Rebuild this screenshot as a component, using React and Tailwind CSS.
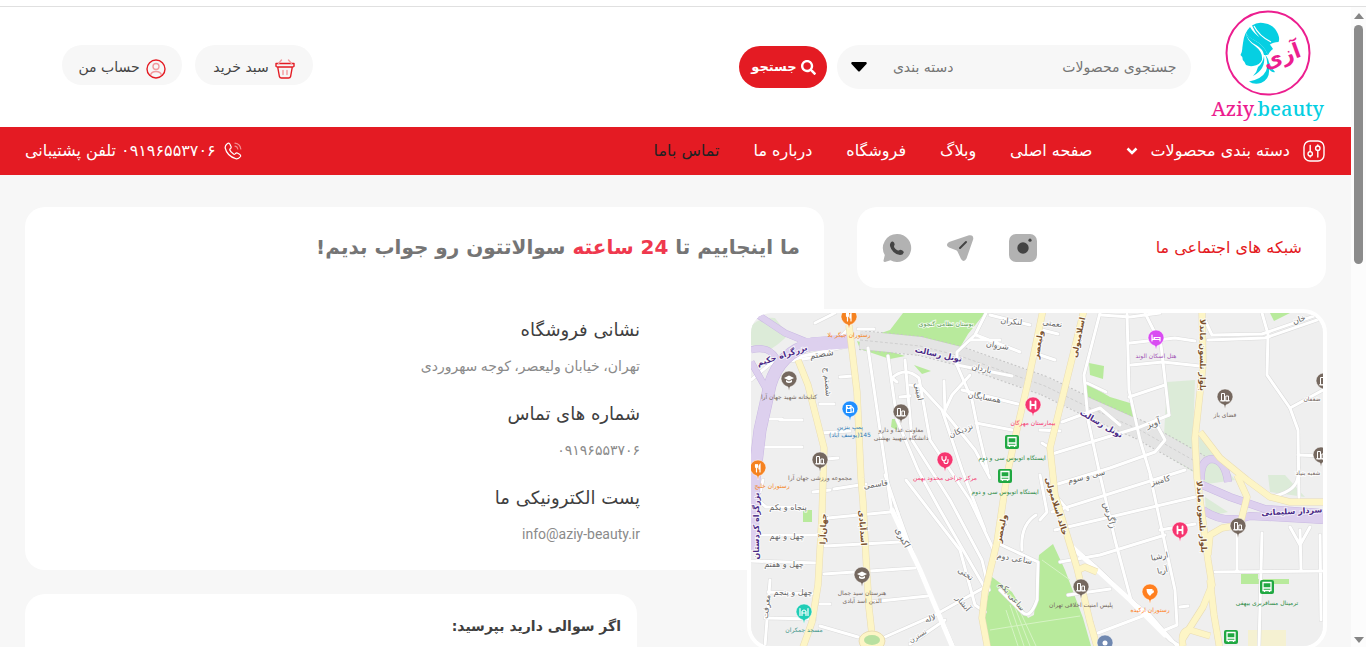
import React, { useState } from "react";

const NAV_LINKS = [
  { label: "صفحه اصلی", href: "#home" },
  { label: "وبلاگ", href: "#blog" },
  { label: "فروشگاه", href: "#shop" },
  { label: "درباره ما", href: "#about" },
  { label: "تماس باما", href: "#contact", active: true },
];

const CONTACT_INFO = [
  { title: "نشانی فروشگاه", value: "تهران، خیابان ولیعصر، کوجه سهروردی" },
  { title: "شماره های تماس", value: "۰۹۱۹۶۵۵۳۷۰۶" },
  { title: "پست الکترونیکی ما", value: "info@aziy-beauty.ir" },
];

// ---- map data ----
const GREENS = [
  "M903 313H985L968 334L958 351L925 343L872 336L890 330Z",
  "M857 341L905 356L890 359L860 349Z",
  "M914 365L931 371L922 374Z",
  "M1089 363L1104 366L1103 379L1090 375Z",
  "M1086 383L1110 397L1130 403L1136 426L1110 412L1088 402Z",
  "M1270 313H1290L1274 321Z",
  "M803 510h9v12h-9z",
  "M892 419h6l-1 11l-6 -3z",
  "M992 577L1012 592L1028 618L1034 615L1039 555L1053 544L1065 570L1083 618L1091 646H988L984 616Z",
  "M1241 574h17v10h-17z",
  "M1258 579h31v5h-31z",
];

const PALE_GREENS = [
  "M751 326Q762 316 775 318L788 335Q780 344 766 352L751 345Z",
  "M1167 382L1195 380L1193 438L1198 475L1163 453Z",
  "M1199 437L1212 450L1235 480L1200 485Z",
  "M1205 497L1228 512L1206 517Z",
  "M1268 475L1285 475L1305 497L1270 492Z",
];

const WHITE_ROADS = [
  "M849 328L823 356L770 364L751 380",
  "M852 345L790 359L776 372L766 420L752 470",
  "M815 323L835 313",
  "M858 329L874 329",
  "M868 348L880 430L892 513",
  "M888 356L897 420L918 470L940 510L985 588",
  "M905 360L912 440L950 500L982 560L989 590",
  "M892 378Q905 366 919 378L930 440L970 500L996 555",
  "M892 378L897 382M919 385L942 410L962 470L985 530",
  "M910 385L918 386M900 397L910 396",
  "M944 381L945 413L975 450L990 478",
  "M970 375L952 395L945 410",
  "M956 363L972 400L978 430L988 472",
  "M986 313L975 335L957 352L957 365L1012 376",
  "M990 315L1030 325M976 335L1020 352M970 340L1000 340",
  "M962 390L1018 404M976 423L1012 430",
  "M1042 330L1058 334M1040 355L1055 360",
  "M840 377L853 376M820 404L834 404M820 433L850 431",
  "M758 419L782 419M780 420L802 420M758 447L802 447",
  "M815 460L838 458M813 492L830 490",
  "M763 480L758 500L766 507L803 507M751 535L823 535M751 561L817 563M770 580L765 646M768 592L815 594M765 618L815 619",
  "M828 518L890 512M825 546L900 542M824 574L915 568M820 604L830 604M870 602L928 596",
  "M834 489L866 484M820 626L858 637M885 637L935 615L985 587M910 644L945 620",
  "M898 513L915 560L935 605L953 646",
  "M885 475L898 513M906 480L960 550L975 605L985 612",
  "M1100 313L1084 375L1088 420L1100 475M1127 313L1129 390L1140 440L1152 480",
  "M1101 315L1130 317L1160 313M1145 313L1161 345L1165 380L1169 415",
  "M1130 343L1175 338L1195 341M1131 365L1163 362L1200 366",
  "M1129 397L1165 385M1062 422L1100 408L1120 425M1052 454L1140 427L1169 415",
  "M1158 427L1165 440L1155 452L1110 468L1058 484",
  "M1087 383L1106 392M1040 430L1060 431",
  "M1042 443L1050 448M1055 495L1068 510",
  "M1055 530L1195 497M1060 562L1100 555L1165 535",
  "M1100 475L1115 540L1131 600L1170 640L1180 646",
  "M1150 475L1163 535L1175 590L1177 625L1165 630",
  "M1070 545L1096 567L1130 600L1150 615L1177 646",
  "M1098 633L1148 614M1068 595L1110 589M1052 512L1185 470",
  "M1040 475L1047 512L1040 520",
  "M1036 515Q1020 525 1022 550M995 542L1038 562L1037 600Q1030 620 1022 612L1000 590",
  "M1160 530L1195 524M1180 607L1188 606",
  "M1205 320L1212 335L1262 334L1323 313M1208 340L1265 338L1323 318",
  "M1262 313L1268 334L1267 375L1290 408L1298 430L1299 500",
  "M1290 408L1323 390M1298 455L1323 456",
  "M1215 572L1323 571M1237 535L1237 572M1262 533L1259 646M1300 530L1301 570M1290 527L1300 545L1310 527M1320 535L1321 620",
  "M1298 475Q1298 490 1275 496",
];

const YELLOW_ROADS = [
  "M798 360L808 385L824 448L822 515L818 585L812 622L802 650",
  "M849 325L857 392L861 478L863 502L866 558L869 608L872 635",
  "M1043 310L1028 382L1015 438L1007 475L997 542L985 592L982 618L988 650",
  "M1084 310L1068 375L1050 448L1055 495L1067 535L1077 568L1090 622L1098 650",
  "M1202 310L1203 365L1195 438L1197 478L1203 522L1208 560L1212 585L1203 607L1182 640",
  "M1210 580L1214 615L1220 650",
  "M1200 432L1220 458L1247 480L1270 497L1290 502L1323 502",
  "M1208 555L1210 535L1222 528L1240 525L1247 497L1237 475",
  "M1078 570L1085 567L1097 572",
  "M1183 646Q1180 630 1190 630L1210 636",
];

const STREETS = [
  { t: "بزرگراه حکیم", x: 783, y: 358, r: -18, c: "#4b2a86", s: 8, b: 1 },
  { t: "تونل رسالت", x: 938, y: 357, r: 12, c: "#4b2a86", s: 8, b: 1 },
  { t: "تونل رسالت", x: 1100, y: 426, r: 30, c: "#4b2a86", s: 8, b: 1 },
  { t: "سردار سلیمانی", x: 1292, y: 514, r: -3, c: "#4b2a86", s: 8, b: 1 },
  { t: "بزرگراه کردستان", x: 759, y: 526, r: -90, c: "#4b2a86", s: 8, b: 1 },
  { t: "ولیعصر", x: 1041, y: 345, r: -80, c: "#7a5230", s: 8, b: 1 },
  { t: "ولیعصر", x: 1004, y: 529, r: -78, c: "#7a5230", s: 8, b: 1 },
  { t: "اسلامبولی", x: 1081, y: 338, r: -78, c: "#7a5230", s: 8, b: 1 },
  { t: "خالد اسلامبولی", x: 1054, y: 507, r: 73, c: "#7a5230", s: 8, b: 1 },
  { t: "بلوار نلسون ماندلا", x: 1200, y: 355, r: 90, c: "#7a5230", s: 8, b: 1 },
  { t: "بلوار نلسون ماندلا", x: 1199, y: 517, r: 86, c: "#7a5230", s: 8, b: 1 },
  { t: "جهان‌آرا", x: 826, y: 529, r: -88, c: "#7a5230", s: 8, b: 1 },
  { t: "اسدآبادی", x: 860, y: 528, r: 86, c: "#7a5230", s: 8, b: 1 },
  { t: "شصتم", x: 822, y: 357, r: -10, c: "#666", s: 9 },
  { t: "شصتم ج", x: 825, y: 382, r: 86, c: "#666", s: 8 },
  { t: "امینی", x: 916, y: 392, r: 78, c: "#666", s: 8 },
  { t: "لنکران", x: 1011, y: 324, r: 6, c: "#666", s: 8 },
  { t: "شروان", x: 997, y: 348, r: 10, c: "#666", s: 8 },
  { t: "باردان", x: 981, y: 371, r: 12, c: "#666", s: 8 },
  { t: "همسایگان", x: 984, y: 400, r: 10, c: "#666", s: 8 },
  { t: "نزدیکان", x: 962, y: 433, r: -22, c: "#666", s: 8 },
  { t: "نعمتی", x: 1052, y: 326, r: 8, c: "#666", s: 8 },
  { t: "آویز", x: 1154, y: 426, r: -18, c: "#666", s: 9 },
  { t: "سی و سوم", x: 1087, y: 479, r: -14, c: "#666", s: 8 },
  { t: "کامبیز", x: 1161, y: 483, r: -14, c: "#666", s: 8 },
  { t: "زاگرس", x: 1107, y: 516, r: 74, c: "#666", s: 9 },
  { t: "ارشیا", x: 1160, y: 559, r: -12, c: "#666", s: 8 },
  { t: "آریا", x: 1163, y: 573, r: -12, c: "#666", s: 8 },
  { t: "قاسمی", x: 876, y: 487, r: -8, c: "#666", s: 8 },
  { t: "پنجاه و یکم", x: 788, y: 510, r: 0, c: "#666", s: 8 },
  { t: "چهل و نهم", x: 787, y: 539, r: 0, c: "#666", s: 8 },
  { t: "چهل و هفتم", x: 784, y: 567, r: 0, c: "#666", s: 8 },
  { t: "چهل و پنجم", x: 793, y: 595, r: 0, c: "#666", s: 8 },
  { t: "معرفت", x: 769, y: 607, r: -84, c: "#666", s: 8 },
  { t: "اکبری", x: 900, y: 539, r: 62, c: "#666", s: 9 },
  { t: "تختی", x: 964, y: 576, r: 35, c: "#666", s: 8 },
  { t: "آبشار", x: 961, y: 605, r: 50, c: "#666", s: 8 },
  { t: "ساعی دوم", x: 1014, y: 561, r: 10, c: "#666", s: 8 },
  { t: "ساعی یکم", x: 1010, y: 598, r: 50, c: "#666", s: 8 },
  { t: "لاله", x: 931, y: 621, r: -18, c: "#666", s: 8 },
  { t: "نسترن", x: 919, y: 638, r: -32, c: "#666", s: 7 },
  { t: "خان", x: 1300, y: 322, r: -20, c: "#666", s: 8 },
  { t: "ضعفان", x: 1312, y: 401, r: 0, c: "#75685f", s: 6 },
  { t: "شعبه بنیاد", x: 1308, y: 475, r: 0, c: "#75685f", s: 6 },
  { t: "بوستان نظامی گنجوی", x: 946, y: 326, r: 0, c: "#5b9a55", s: 6 },
];

const PLACES = [
  { x: 849, y: 317, c: "#f58220", icon: "fork", lines: ["رستوران جیگر بلا"] },
  { x: 789, y: 379, c: "#75685f", icon: "cap", lines: ["کتابخانه شهید جهان آرا"] },
  { x: 850, y: 409, c: "#1f8fff", tc: "#2b7bb9", icon: "fuel", lines: ["پمپ بنزین", "145(یوسف آباد)"] },
  { x: 901, y: 412, c: "#75685f", icon: "building", lines: ["معاونت غذا و دارو", "دانشگاه شهیید بهشتی"] },
  { x: 820, y: 460, c: "#75685f", icon: "building", lines: ["مجموعه ورزشی جهان آرا"] },
  { x: 758, y: 468, c: "#f58220", icon: "fork", lines: ["رستوران خلیج"], dx: 14 },
  { x: 945, y: 460, c: "#f6356f", icon: "steth", lines: ["مرکز جراحی محدود بهمن"] },
  { x: 1033, y: 405, c: "#f6356f", icon: "h", lines: ["بیمارستان مهرگان"] },
  { x: 1180, y: 530, c: "#f6356f", icon: "h", lines: [] },
  { x: 1156, y: 338, c: "#d94cf2", tc: "#a355b5", icon: "bed", lines: ["هتل اسکان الوند"] },
  { x: 1225, y: 397, c: "#75685f", icon: "building", lines: ["فضای باز"] },
  { x: 1324, y: 381, c: "#75685f", icon: "building", lines: [] },
  { x: 1321, y: 455, c: "#75685f", icon: "building", lines: [] },
  { x: 1238, y: 526, c: "#75685f", icon: "building", lines: [] },
  { x: 862, y: 575, c: "#75685f", icon: "cap", lines: ["هنرستان سید جمال", "الدین اسد آبادی"] },
  { x: 804, y: 612, c: "#20cdb6", tc: "#3a9488", icon: "mosque", lines: ["مسجد جمکران"] },
  { x: 1081, y: 587, c: "#75685f", icon: "building", lines: ["پلیس امنیت اخلاقی تهران"] },
  { x: 1150, y: 592, c: "#ff7f1f", icon: "cup", lines: ["رستوران ارکیده"] },
  { x: 1105, y: 643, c: "#7088b0", icon: "dot", lines: [] },
];

const STATIONS = [
  { x: 1012, y: 442, label: "ایستگاه اتوبوس سی و دوم" },
  { x: 1005, y: 476, label: "ایستگاه اتوبوس سی و دوم" },
  { x: 1267, y: 587, label: "ترمینال مسافربری بیهقی" },
  { x: 1231, y: 637, label: "" },
];

function PinIcon({ name }) {
  const line = { fill: "none", stroke: "#fff", strokeWidth: 1.2, strokeLinecap: "round" };
  switch (name) {
    case "fork":
      return <path d="M-2.5 -3.5v2q0 1.5 1 1.5v4M-1.5 -3.5v3M-.5 -3.5v2q0 1.500 -1 1.500M2 4v-7.500q-1.500 1.500 -1 4.500h1" {...line} />;
    case "cap":
      return <path d="M-5 -1L0 -3.500L5 -1L0 1.500ZM-3 1v2q3 2 6 0v-2l-3 1.500z" fill="#fff" />;
    case "fuel":
      return <path d="M-3.500 3.500v-7h4.500v7zM-2.500 -2v1.500h2.500V-2M2 -2l1.500 1.500v3.500h-1.500" {...line} />;
    case "steth":
      return <path d="M-3 -3.500v2q0 2 2 2t2 -2v-2M-1 .5v1q0 2 2 2t2 -2v-2" {...line} />;
    case "h":
      return <path d="M-2.500 -3.500v7M2.500 -3.500v7M-2.500 0h5" {...line} strokeWidth={1.8} />;
    case "bed":
      return <path d="M-4 -3v6M-4 1.500h8M4 3v-3.500h-5.500v2M-2.800 0h.2" {...line} />;
    case "mosque":
      return <path d="M-4 -3.500v7M4 -3.500v7M-2 3.500v-4q2 -3 4 0v4M-2 1h4" {...line} />;
    case "cup":
      return <path d="M-3.500 -3h6v1.500h1.500q0 3 -2 3L0 4L-2 2Q-3.500 0 -3.500 -3Z" fill="#fff" />;
    case "dot":
      return <circle r="2.500" fill="#fff" />;
    default:
      return <path d="M-3.500 3.500v-7h3v7zM.8 3.500v-4.500h2.700v4.500zM-4.500 3.800h9" {...line} strokeWidth={1} />;
  }
}

function CityMap() {
  const font = "'DejaVu Sans', sans-serif";
  return (
    <svg viewBox="751 313 572 333" className="block h-auto w-full" role="img" aria-label="نقشه">
      <rect x="751" y="313" width="572" height="333" fill="#efefef" />
      {PALE_GREENS.map((d) => <path key={d} d={d} fill="#dcebd8" />)}
      {GREENS.map((d) => <path key={d} d={d} fill="#b8ea9c" />)}
      <rect x="1248" y="630" width="38" height="18" fill="#f5f1d2" />
      <path d="M1010 605L1024 646M1014 605L1030 646M1018 607L1036 646M1006 610L1018 646M990 630L1040 622L1080 616M1042 560L1070 580" stroke="#d6f3c4" strokeWidth="1" fill="none" />

      {/* tunnel */}
      <g fill="none">
        <path d="M860 340L920 346L960 356L1045 386L1090 408L1140 430L1200 464" stroke="#c4c4c4" strokeWidth="20" strokeDasharray="2 2" />
        <path d="M860 340L920 346L960 356L1045 386L1090 408L1140 430L1200 464" stroke="#e4e4e4" strokeWidth="18" />
        <path d="M860 340L920 346L960 356L1045 386L1090 408L1140 430L1200 464" stroke="#cfcfcf" strokeWidth="1" strokeDasharray="3 2" />
      </g>

      <g fill="none" strokeLinejoin="round" strokeLinecap="round">
        {WHITE_ROADS.map((d) => <path key={d} d={d} stroke="#dadada" strokeWidth="4" />)}
        {WHITE_ROADS.map((d) => <path key={d} d={d} stroke="#fff" strokeWidth="3" />)}
        <path d="M892 510L920 570L953 648M1070 545L1130 600L1165 635" stroke="#fff" strokeWidth="5" />
      </g>

      {/* highways */}
      <g fill="none" stroke="#c9b8e2">
        <path d="M852 341L812 344Q780 352 770 385L760 430L754 480L752 550" strokeWidth="13" />
        <path d="M755 313L785 333L812 344M751 350Q768 345 776 358M751 362L768 392" strokeWidth="7" />
        <path d="M1200 484L1230 497L1265 509L1323 513M1203 510Q1225 525 1250 516L1323 520M1201 480Q1200 460 1212 459Q1225 460 1228 482" strokeWidth="8" />
      </g>
      <g fill="none" stroke="#ddd0ee">
        <path d="M852 341L812 344Q780 352 770 385L760 430L754 480L752 550" strokeWidth="12" />
        <path d="M755 313L785 333L812 344M751 350Q768 345 776 358M751 362L768 392" strokeWidth="6" />
        <path d="M1200 484L1230 497L1265 509L1323 513M1203 510Q1225 525 1250 516L1323 520M1201 480Q1200 460 1212 459Q1225 460 1228 482" strokeWidth="7" />
        <path d="M800 341L852 336V346L800 350Z" fill="#ddd0ee" strokeWidth="4" />
      </g>

      <g fill="none" strokeLinejoin="round">
        {YELLOW_ROADS.map((d) => <path key={d} d={d} stroke="#e9dcb4" strokeWidth="7" />)}
        {YELLOW_ROADS.map((d) => <path key={d} d={d} stroke="#fdf5c6" strokeWidth="6" />)}
      </g>
      <ellipse cx="872" cy="641" rx="13" ry="10" fill="#fdf5c6" stroke="#e9dcb4" />
      <ellipse cx="872" cy="640" rx="8" ry="5" fill="#b8e0a0" />

      {STREETS.map((s) => (
        <text
          key={s.t + s.x}
          transform={`translate(${s.x} ${s.y}) rotate(${s.r})`}
          textAnchor="middle"
          fontFamily={font}
          fontSize={s.s}
          fontWeight={s.b ? 600 : 400}
          fill={s.c}
          stroke="#fff"
          strokeWidth="2"
          strokeOpacity="0.7"
          paintOrder="stroke"
        >
          {s.t}
        </text>
      ))}

      {STATIONS.map((s) => (
        <g key={s.y} transform={`translate(${s.x} ${s.y})`}>
          <rect x="-7" y="-7" width="14" height="14" rx="2" fill="#20a842" />
          <path d="M-4 -4.500h8v8h-8zM-4 1h8M-2.500 3.500v1.500M2.500 3.500v1.500" fill="none" stroke="#fff" strokeWidth="1.300" />
          {s.label && <text y="18" textAnchor="middle" fontFamily={font} fontSize="6" fill="#2b8a45">{s.label}</text>}
        </g>
      ))}

      {PLACES.map((p) => (
        <g key={`${p.x}-${p.y}`} transform={`translate(${p.x} ${p.y})`}>
          <path d="M-8 0A8 8 0 1 1 8 0Q7 6 1 8L0 12L-1 8Q-7 6 -8 0Z" fill={p.c} stroke="#fff" strokeWidth="0.500" />
          <PinIcon name={p.icon} />
          {p.lines.map((line, i) => (
            <text key={line} x={p.dx || 0} y={20 + i * 8} textAnchor="middle" fontFamily={font} fontSize="6" fill={p.tc || p.c}>
              {line}
            </text>
          ))}
        </g>
      ))}
    </svg>
  );
}

function Logo() {
  return (
    <a href="#home" className="flex flex-col items-center" aria-label="Aziy.beauty">
      <svg viewBox="0 0 88 88" className="h-[88px] w-[88px]">
        <circle cx="44" cy="44" r="41.500" fill="#fff" stroke="#ec1e8f" strokeWidth="2" />
        {/* face and hair */}
        <path d="M19 34Q20 24 26 18Q30 25 37 29Q45 33 49 40Q46 42 44 46Q40 36 30 31Q24 28 22 24Q23 32 31 37Q39 43 38 51Q36 56 29 57Q25 57.500 22 56L20.500 53L18.800 51L18.300 48L16.500 46Q18.500 42 18.300 39Z" fill="#06cfe2" />
        <path d="M22 25Q24 32 32 36Q39 40 40 46L44 46Q40 36 30 31Q25 28 22 25Z" fill="#06cfe2" />
        <path d="M28 16.500Q33 13 39 14Q50 15 54 25Q56 30 54.500 33Q47 33 44 38Q41 33 36 29Q31 24 28 16.500Z" fill="#06cfe2" />
        <path d="M30 17Q35 27 47 33" fill="none" stroke="#fff" strokeWidth="1.200" />
        <path d="M41 45Q45 54 42 62Q38 70 25 72.500Q30 76 37 74Q46 70 45 60Q48 64 51 63Q45 56 44 50Z" fill="#06cfe2" />
        <path d="M40 47Q42 60 29 67Q33 63 34 58Q39 54 40 47Z" fill="#06cfe2" />
        <text x="58" y="54" textAnchor="middle" fontFamily="'DejaVu Sans', sans-serif" fontSize="21" fontWeight="700" fill="#ec1e8f" transform="rotate(-20 58 48)">
          آزی
        </text>
      </svg>
      <span dir="ltr" className="font-['Noto_Serif','Liberation_Serif',serif] text-xl leading-6 font-medium text-[#06cfe2]">
        <span className="text-[#ec1e8f]">Aziy</span>.beauty
      </span>
    </a>
  );
}

function Header() {
  const [query, setQuery] = useState("");

  return (
    <header className="flex min-h-[120px] items-center justify-between bg-white ps-[27px] pe-[62px] pb-1">
      <div className="flex items-center gap-5">
        <Logo />
        <form className="flex items-center gap-[10px] pt-1" onSubmit={(e) => e.preventDefault()}>
          <div className="flex h-11 w-[354px] items-center rounded-full bg-[#f7f7f7] pe-6 ps-[15px] text-[#757575]">
            <input
              type="text"
              aria-label="جستجوی محصولات"
              placeholder="جستجوی محصولات"
              value={query}
              onChange={(e) => setQuery(e.target.value)}
              className="min-w-0 flex-1 bg-transparent text-sm outline-none placeholder:text-[#757575]"
            />
            <div className="relative flex w-[92px] items-center">
              <select aria-label="دسته بندی" className="w-full appearance-none bg-transparent text-sm outline-none">
                <option>دسته بندی</option>
              </select>
              <svg viewBox="0 0 16 10" className="pointer-events-none absolute end-[-10px] h-[10px] w-4">
                <path d="M1 0H15Q16.500 1 15 2.500L9 9Q8 10 7 9L1 2.500Q-.5 1 1 0Z" fill="#000" />
              </svg>
            </div>
          </div>
          <button type="submit" className="flex h-[42px] w-[88px] items-center justify-center gap-1 rounded-full bg-[#e41b23] text-[13px] font-bold text-white">
            <svg viewBox="0 0 512 512" className="h-[15px] w-[15px]" fill="currentColor">
              <path d="M505 442.700L405.300 343c-4.500-4.500-10.600-7-17-7H372c27.600-35.300 44-79.700 44-128C416 93.100 322.900 0 208 0S0 93.100 0 208s93.100 208 208 208c48.300 0 92.700-16.400 128-44v16.300c0 6.400 2.500 12.500 7 17l99.700 99.700c9.400 9.400 24.600 9.400 33.900 0l28.300-28.300c9.400-9.400 9.400-24.600.1-34zM208 336c-70.700 0-128-57.200-128-128 0-70.700 57.200-128 128-128 70.700 0 128 57.200 128 128 0 70.700-57.200 128-128 128z" />
            </svg>
            جستجو
          </button>
        </form>
      </div>

      <div className="flex items-center gap-[13px] text-sm text-[#444]">
        <a href="#cart" className="flex h-10 w-[118px] items-center justify-center gap-1.5 rounded-full bg-[#f7f7f7] pt-1">
          <svg viewBox="0 0 20 20" className="mt-1 h-5 w-5" fill="none" stroke="#e41b23" strokeWidth="1.400" strokeLinecap="round" strokeLinejoin="round">
            <path d="M1 4.500h18v2.800q-.3.700-1.500.7h-15Q1.300 8 1 7.300zM2.700 8l1.700 9.500q.5 1.500 2 1.500h7.200q1.500 0 2-1.500L17.300 8" />
            <path d="M6.500 1L3.500 4.500M13.500 1l3 3.500M8 11.500v4M12 11.500v4" stroke="#f29a9e" />
          </svg>
          سبد خرید
        </a>
        <a href="#account" className="flex h-10 w-[120px] items-center justify-center gap-1.5 rounded-full bg-[#f7f7f7] pt-1">
          <svg viewBox="0 0 20 20" className="mt-1 h-5 w-5" fill="none" strokeWidth="1.400">
            <circle cx="10" cy="10" r="9" stroke="#e41b23" />
            <circle cx="10" cy="7.500" r="3" stroke="#f29a9e" />
            <path d="M4.500 16q1-3.500 5.500-3.500t5.500 3.500" stroke="#f29a9e" />
          </svg>
          حساب من
        </a>
      </div>
    </header>
  );
}

function NavBar() {
  return (
    <nav className="flex h-12 items-center justify-between bg-[#e41b23] px-[25px] text-base text-white">
      <div className="flex items-center gap-[34px]">
        <button type="button" className="flex items-center">
          <svg viewBox="0 0 24 24" className="me-3 h-6 w-6" fill="none" stroke="currentColor" strokeWidth="1.400" strokeLinecap="round">
            <rect x="2" y="2" width="20" height="20" rx="6" />
            <path d="M8.200 17v1M8.200 6.500v6M15.800 11.500v6.500M15.800 6v1" />
            <circle cx="8.200" cy="14.800" r="2.200" />
            <circle cx="15.800" cy="9.200" r="2.200" />
          </svg>
          دسته بندی محصولات
          <svg viewBox="0 0 12 8" className="ms-3 h-2 w-3" fill="none" stroke="currentColor" strokeWidth="2.500">
            <path d="M1.500 1.500L6 6L10.500 1.500" />
          </svg>
        </button>
        {NAV_LINKS.map((link) => (
          <a key={link.label} href={link.href} className={link.active ? "text-[#222]" : "text-white"}>
            {link.label}
          </a>
        ))}
      </div>
      <a href="tel:09196553706" className="flex items-center gap-2">
        <svg viewBox="0 0 18 18" className="h-[18px] w-[18px]" fill="none" stroke="currentColor" strokeWidth="1.200" strokeLinecap="round" strokeLinejoin="round">
          <path d="M3.500 1.500Q.8 3.500 1.200 6Q3 14 12 16.800Q14.500 17.200 16.500 14.500Q17 13 15.500 12.200L13.300 11Q12.300 10.700 11.500 11.500Q10.500 12.800 9.500 12Q6.500 10 5.800 8Q5.500 7.300 6.500 6.500Q7.500 5.500 7 4.500L5.800 2Q4.800.7 3.500 1.500Z" />
          <path d="M11 1.200Q16 1.800 16.800 7M11 4.200Q13.500 4.700 13.800 7" strokeOpacity="0.500" />
        </svg>
        <span>۰۹۱۹۶۵۵۳۷۰۶ تلفن پشتیبانی</span>
      </a>
    </nav>
  );
}

function SocialCard() {
  return (
    <section className="flex h-[81px] items-center justify-between rounded-[20px] bg-white px-6">
      <h2 className="text-base text-[#e41b23]">شبکه های اجتماعی ما</h2>
      <div className="flex items-center gap-[31px]">
        <a href="#instagram" aria-label="Instagram">
          <svg viewBox="0 0 32 32" className="h-8 w-8">
            <rect x="2" y="2" width="28" height="28" rx="7" fill="#b2b2b2" />
            <circle cx="16" cy="16" r="5.700" fill="#444" />
            <circle cx="23" cy="8.200" r="1.600" fill="#444" />
          </svg>
        </a>
        <a href="#telegram" aria-label="Telegram">
          <svg viewBox="0 0 32 32" className="h-8 w-8">
            <path d="M5 10L25 3.300Q29.500 2.500 29.300 7L22.500 26.500Q20 31 17 27L13.500 19.500Q12.800 18.300 11.500 18L5 15.500Q.8 13 5 10Z" fill="#b2b2b2" />
            <path d="M16 16L22 10" stroke="#444" strokeWidth="2" strokeLinecap="round" />
          </svg>
        </a>
        <a href="#whatsapp" aria-label="WhatsApp">
          <svg viewBox="0 0 32 32" className="h-8 w-8">
            <path d="M16 2A14 14 0 1 1 9.500 28.300L4 30Q2.300 30 2.500 28.500L3.800 23A14 14 0 0 1 16 2Z" fill="#b2b2b2" />
            <path d="M11 9.500Q8.500 11 9 14Q11 21.500 19 23Q22 23 22.800 20.500Q22.800 19 21 18.300Q18.800 17.300 18 18.500Q17 19 14.500 17Q12.500 14.800 13 14Q14.200 13 13.300 11Q12.500 9 11 9.500Z" fill="#444" />
          </svg>
        </a>
      </div>
    </section>
  );
}

function Scrollbar() {
  return (
    <div className="flex w-[15px] shrink-0 flex-col items-center bg-[#fcfcfc] pt-1.5 pb-1" aria-hidden="true">
      <svg viewBox="0 0 10 6" className="h-1.5 w-[10px]"><path d="M0 6L5 0L10 6Z" fill="#858585" /></svg>
      <div className="mt-1.5 h-[38%] w-[9px] rounded-full bg-[#8b8b8b]" />
      <svg viewBox="0 0 10 6" className="mt-auto h-1.5 w-[10px]"><path d="M0 0L5 6L10 0Z" fill="#858585" /></svg>
    </div>
  );
}

export default function App() {
  return (
    <div className="flex h-screen flex-col overflow-hidden bg-white pt-1.5 font-['DejaVu_Sans',sans-serif]">
      <div className="h-px shrink-0 bg-[#e0e0e0]" />
      <div className="flex min-h-0 flex-1">
        <div dir="rtl" className="min-w-0 flex-1 overflow-hidden bg-[#f7f7f7]">
          <Header />
          <NavBar />

          <main className="flex items-start gap-[33px] px-[25px] pt-8">
            <aside className="relative z-10 flex w-[469px] shrink-0 flex-col gap-[21px]">
              <SocialCard />
              <div className="-ms-px -me-[110px] overflow-hidden rounded-[24px] border-4 border-white">
                <CityMap />
              </div>
            </aside>

            <div className="flex min-w-0 flex-1 flex-col gap-6">
              <section className="rounded-[20px] bg-white px-6 pt-6 pb-[18px]">
                <h1 className="text-xl leading-8 font-bold whitespace-nowrap text-[#757575]">
                  ما اینجاییم تا <span className="text-[#ef394e]">24 ساعته</span> سوالاتتون رو جواب بدیم!
                </h1>
                <dl className="mt-[49px] flex flex-col gap-3 ps-[160px]">
                  {CONTACT_INFO.map((item) => (
                    <div key={item.title}>
                      <dt className="text-lg leading-9 text-[#3f3f3f]">{item.title}</dt>
                      <dd className="font-['Roboto','DejaVu_Sans',sans-serif] text-sm leading-9 text-[#8a8a8a]">{item.value}</dd>
                    </div>
                  ))}
                </dl>
              </section>

              <section className="ms-[187px] min-h-72 rounded-[20px] bg-white px-4 pt-4">
                <h2 className="text-sm leading-8 font-bold text-[#3f3f3f]">اگر سوالی دارید بپرسید:</h2>
              </section>
            </div>
          </main>
        </div>
        <Scrollbar />
      </div>
    </div>
  );
}
